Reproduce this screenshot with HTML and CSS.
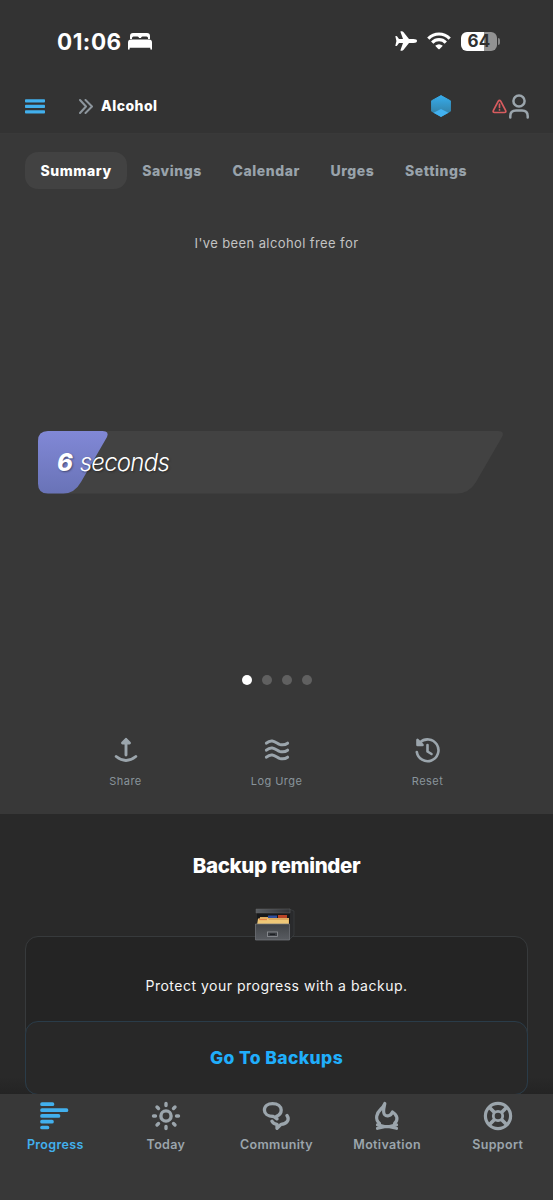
FILE: index.html
```html
<!DOCTYPE html>
<html lang="en">
<head>
<meta charset="utf-8">
<title>Alcohol – Progress</title>
<link rel="stylesheet" href="styles.css">
</head>
<body>
<div class="app">
  <header class="top">
    <div class="status">
      <span class="clock">01:06</span>
      <svg class="bed" width="24" height="17" viewBox="0 0 24 17" fill="#fff"><path d="M2 6V3Q2 0 5 0H19Q22 0 22 3V6H20V5Q20 3.500 18.500 3.500H14.500Q13 3.500 13 5H11Q11 3.500 9.500 3.500H5.500Q4 3.500 4 5V6Z"/><path d="M3 6.500H21Q24 6.500 24 9.500V15.500Q24 16.700 23.200 16.700Q22.300 16.700 22.300 15.500V14.800H1.700V15.500Q1.700 16.700 .8 16.700Q0 16.700 0 15.500V9.500Q0 6.500 3 6.500Z"/></svg>
      <div class="signals">
        <svg width="22" height="20" viewBox="0 0 22 20" fill="#fff"><path d="M22 10Q22 8.100 18.500 8.100H14L8.400 .9Q7.800 .2 6.800 .2H5.900Q5.300 .2 5.500 .9L8 8.100H4L2 5.300Q1.700 5 1.200 5H.7Q.3 5 .4 5.500L1.400 10L.4 14.500Q.3 15 .7 15H1.200Q1.700 15 2 14.700L4 11.900H8L5.500 19.100Q5.300 19.800 5.900 19.800H6.800Q7.800 19.800 8.400 19.100L14 11.900H18.500Q22 11.900 22 10Z"/></svg>
        <svg width="24" height="18" viewBox="0 0 24 18"><g fill="none" stroke="#fff" stroke-width="3.200"><path d="M1.300 6.600Q6 2 12 2T22.700 6.600"/><path d="M5.200 10.600Q8 7.700 12 7.700T18.800 10.600"/></g><path d="M8.200 13.700Q12 10.700 15.800 13.700L12.700 17Q12 17.700 11.300 17Z" fill="#fff"/></svg>
        <div class="battery"><span class="level">64</span></div>
      </div>
    </div>
    <div class="titlebar">
      <svg width="20" height="15" viewBox="0 0 20 15" fill="#42b0ed"><rect width="20" height="3.300" rx=".8" y=".2"/><rect width="20" height="3.300" rx=".8" y="5.700"/><rect width="20" height="3.300" rx=".8" y="11.200"/></svg>
      <svg class="chevrons" width="14" height="15" viewBox="0 0 14 15" fill="none" stroke="#8d969d" stroke-width="2" stroke-linecap="round" stroke-linejoin="round"><path d="M1 1L7 7.500L1 14M6.500 1L13 7.500L6.500 14"/></svg>
      <h1 class="title">Alcohol</h1>
      <svg class="gem" width="20" height="22" viewBox="0 0 20 22"><defs><linearGradient id="gem" x2="0" y2="1"><stop stop-color="#36acec"/><stop offset=".65" stop-color="#348cb8"/><stop offset="1" stop-color="#2f7da5"/></linearGradient></defs><path d="M10 .6L19.400 5.800V16.200L10 21.400L.6 16.200V5.800Z" fill="url(#gem)" stroke="url(#gem)" stroke-linejoin="round"/><path d="M10 14L17.500 17.700L10 21.900L2.500 17.700Z" fill="#42b1f0"/></svg>
      <div class="account">
        <svg width="15" height="15" viewBox="0 0 15 15" fill="none" stroke="#d95c5f" stroke-width="1.700" stroke-linecap="round" stroke-linejoin="round"><path d="M6.300 2.200Q7.500.5 8.700 2.200L13.700 11.700Q14.300 13.500 12.500 13.500H2.500Q.7 13.500 1.300 11.700ZM7.500 5.200V8.500M7.500 10.800V11"/></svg>
        <svg width="20" height="25" viewBox="0 0 20 25" fill="none" stroke="#9ba5ac" stroke-width="2.500" stroke-linecap="round"><circle cx="10" cy="7" r="5.600"/><path d="M1.300 23.500V22Q1.300 16.500 7 16.500H13Q18.700 16.500 18.700 22V23.500"/></svg>
      </div>
    </div>
  </header>

  <main class="summary">
    <nav class="tabs">
      <span class="tab tab-active">Summary</span>
      <span class="tab">Savings</span>
      <span class="tab">Calendar</span>
      <span class="tab">Urges</span>
      <span class="tab">Settings</span>
    </nav>
    <p class="intro">I've been alcohol free for</p>
    <div class="meter">
      <svg class="meter-shape" width="466" height="63" viewBox="0 0 466 63"><defs><linearGradient id="fill" x2="0" y2="1"><stop stop-color="#8188d6"/><stop offset="1" stop-color="#6973b7"/></linearGradient></defs><path d="M10 0H460Q467 0 464 6L438 51Q431 62.500 419 62.500H10Q0 62.500 0 52.500V10Q0 0 10 0Z" fill="#424242"/><path d="M10 0H64.500Q71.500 0 69 6L43 51Q36.500 62.500 25.500 62.500H10Q0 62.500 0 52.500V10Q0 0 10 0Z" fill="url(#fill)"/></svg>
      <p class="elapsed"><b>6</b> seconds</p>
    </div>
    <div class="dots"><i class="dot dot-on"></i><i class="dot"></i><i class="dot"></i><i class="dot"></i></div>
    <div class="actions">
      <div class="action">
        <svg width="24" height="26" viewBox="0 0 24 26" fill="none" stroke="#9ba5ac" stroke-width="2.900" stroke-linecap="round" stroke-linejoin="round"><path d="M2.200 19.500Q12 27.500 21.800 19.500"/><path d="M12 18V5M8.500 6L12 2.400L15.500 6Z"/></svg>
        <span>Share</span>
      </div>
      <div class="action">
        <svg width="26" height="26" viewBox="0 0 26 26" fill="none" stroke="#9ba5ac" stroke-width="3" stroke-linecap="round"><path d="M2.400 6.200C8 1 12 6 15.500 7.300Q20 8.800 23.600 6.200M2.400 13.200C8 8 12 13 15.500 14.300Q20 15.800 23.600 13.200M2.400 20.200C8 15 12 20 15.500 21.300Q20 22.800 23.600 20.200"/></svg>
        <span>Log Urge</span>
      </div>
      <div class="action">
        <svg width="26" height="26" viewBox="0 0 26 26" fill="none" stroke="#9ba5ac" stroke-width="2.600" stroke-linecap="round" stroke-linejoin="round"><path d="M1.800 15A10.900 10.900 0 1 0 5 5.400"/><path d="M2.500 3V8H7.500Z" fill="#9ba5ac"/><path d="M12.500 8V14.500L16.500 17"/></svg>
        <span>Reset</span>
      </div>
    </div>
  </main>

  <section class="backup">
    <h2 class="backup-title">Backup reminder</h2>
    <div class="card">
      <svg class="cabinet" width="42" height="34" viewBox="0 0 42 34"><defs><linearGradient id="front" x2="0" y2="1"><stop stop-color="#404347"/><stop offset="1" stop-color="#595c61"/></linearGradient><linearGradient id="lid"><stop stop-color="#5a5e63"/><stop offset="1" stop-color="#303236"/></linearGradient></defs><path d="M34 1L39 3V27L34 32Z" fill="#292a2c" stroke="#3c4044" stroke-width=".7"/><rect x="2" y="4" width="33" height="15" fill="#17181a"/><path d="M1 1H35V5H1Z" fill="url(#lid)" stroke="#666" stroke-width=".5"/><path d="M13 7.500H22V12H13Z" fill="#304f9e"/><path d="M23 7H32V11H23Z" fill="#b84427"/><path d="M5 9H13V10H34V16H4Z" fill="#dba95e"/><path d="M3 10.500H13L14 12H33.500V17H2Z" fill="#efc878"/><path d="M4 11.500H12" stroke="#e98544" stroke-width="1.300"/><path d="M.5 16H34.500V32H.5Z" fill="url(#front)" stroke="#75797e" stroke-width=".7"/><rect x="12.500" y="24" width="10" height="4.500" fill="#3a3d42" stroke="#92959a" stroke-width=".8"/><path d="M15 26.300H20" stroke="#181a1d"/></svg>
      <p class="card-text">Protect your progress with a backup.</p>
      <a class="card-button">Go To Backups</a>
    </div>
  </section>

  <nav class="bottom">
    <div class="item item-active">
      <svg width="30" height="30" viewBox="0 0 30 30" fill="none" stroke="#42b0ed" stroke-width="3.700" stroke-linecap="round"><path d="M2 3.200H12.500M2 9.200H26.500M2 14.900H18.500M2 20.700H12M2 26.500H7.500"/></svg>
      <span>Progress</span>
    </div>
    <div class="item">
      <svg width="30" height="30" viewBox="0 0 30 30" fill="none" stroke="#9ba5ac" stroke-width="3.400" stroke-linecap="round"><circle cx="15" cy="15" r="5.100"/><path d="M15 2.500V4.500M15 25.500V27.500M2.500 15H4.500M25.500 15H27.500M6 6L7.500 7.500M22.500 22.500L24 24M24 6L22.500 7.500M6 24L7.500 22.500"/></svg>
      <span>Today</span>
    </div>
    <div class="item">
      <svg width="30" height="30" viewBox="0 0 30 30" fill="none" stroke="#9ba5ac" stroke-width="3.300" stroke-linecap="round" stroke-linejoin="round"><path d="M12.500 15.500C6.500 15.500 3.400 12.500 3.400 9C3.400 5 7 2.600 11.500 2.600C17 2.600 20.200 5.500 20.200 9C20.200 12 18 14.300 15.500 15.300L16 18Z"/><path d="M26 14.500C29 19 25.500 23 20 23.300L16 27.300V23.300C13.500 23 11.800 21.800 11 20.200"/></svg>
      <span>Community</span>
    </div>
    <div class="item">
      <svg width="30" height="30" viewBox="0 0 30 30" fill="none" stroke="#9ba5ac" stroke-width="3.200" stroke-linecap="round" stroke-linejoin="round"><path d="M7.500 22.500C2.500 18 4.800 12 8.500 8.500C10.500 6.500 12 4.500 12.800 2.500C12 7 10.500 11 12.500 13.500C14.500 15.800 18.500 15.500 20.500 11C25.500 14 26.500 19 22.500 22.500"/><path d="M5.500 27.300L12.500 25.600H17.500L24.500 27.300M5.500 23.800L12.500 25.600M24.500 23.800L17.500 25.600"/></svg>
      <span>Motivation</span>
    </div>
    <div class="item">
      <svg width="30" height="30" viewBox="0 0 30 30" fill="none" stroke="#9ba5ac"><circle cx="15" cy="15" r="12.600" stroke-width="3.200"/><circle cx="15" cy="15" r="4.700" stroke-width="2.800"/><path d="M6.500 6.500L11.500 11.500M18.500 18.500L23.500 23.500M23.500 6.500L18.500 11.500M6.500 23.500L11.500 18.500" stroke-width="3.600"/></svg>
      <span>Support</span>
    </div>
  </nav>
</div>
</body>
</html>
```
FILE: styles.css
```css
* { box-sizing: border-box; margin: 0; padding: 0; }
svg { display: block; flex: none; }
body { background: #383838; font-family: Inter, "Liberation Sans", sans-serif; color: #fff; }
.app { width: 553px; height: 1200px; display: flex; flex-direction: column; overflow: hidden; }

.top { height: 133px; flex: none; background: #333; }
.status { height: 82px; display: flex; align-items: center; padding: 0 53px 0 57px; }
.clock { width: 71px; font-size: 22.500px; font-weight: 700; letter-spacing: .5px; white-space: nowrap; }
.signals { margin-left: auto; display: flex; align-items: center; gap: 10px; }
.battery { position: relative; width: 36px; height: 19px; border-radius: 6px; background: linear-gradient(90deg, #fff 64%, #929292 64%); display: flex; align-items: center; justify-content: center; margin-right: 3px; }
.battery::after { content: ""; position: absolute; right: -3px; top: 6px; width: 2px; height: 7px; border-radius: 0 2px 2px 0; background: #858585; }
.level { color: #303030; font-size: 17px; font-weight: 700; line-height: 19px; letter-spacing: .2px; }
.titlebar { height: 48px; display: flex; align-items: center; padding: 0 24px 0 25px; }
.chevrons { margin-left: 34px; }
.title { margin-left: 8px; font-size: 14px; line-height: 17px; margin-bottom: 1px; font-weight: 800; letter-spacing: .45px; }
.gem { margin-left: auto; }
.account { display: flex; align-items: center; gap: 2px; margin-left: 41px; }

.summary { height: 681px; flex: none; padding-top: 18px; background: #383838; border-top: 1px solid #393939; }
.tabs { display: flex; padding-left: 25px; height: 37px; }
.tab { padding: 0 15px 0 15.500px; line-height: 37px; font-size: 14px; font-weight: 800; letter-spacing: .58px; color: #99a3ab; border-radius: 13px; }
.tab-active { background: #424242; color: #fff; }
.intro { margin-top: 44px; line-height: 20px; text-align: center; font-size: 13px; letter-spacing: .4px; color: #c3c3c3; }
.meter { margin: 178px 0 0 38px; width: 466px; height: 63px; display: grid; }
.meter-shape, .elapsed { grid-area: 1 / 1; }
.elapsed { padding-left: 19px; line-height: 63px; font-size: 24px; font-weight: 350; font-style: italic; letter-spacing: -.75px; word-spacing: 1.500px; text-shadow: 1px 1px 2px #0006; }
.elapsed b { font-weight: 800; }
.dots { margin: 181px 0 0; display: flex; justify-content: center; gap: 10px; }
.dot { width: 10px; height: 10px; border-radius: 50%; background: #606060; }
.dot-on { background: #fff; }
.actions { margin: 52px 50px 0; display: grid; grid-template-columns: repeat(3, 1fr); }
.action { display: flex; flex-direction: column; align-items: center; gap: 10px; font-size: 11px; line-height: 17px; letter-spacing: .45px; color: #89949b; }

.backup { height: 280px; flex: none; background: linear-gradient(#292929 94%, #242424); overflow: hidden; }
.backup-title { margin-top: 39px; line-height: 26px; text-align: center; font-size: 20.500px; font-weight: 800; letter-spacing: -.35px; }
.card { position: relative; width: 503px; height: 159px; margin: 57px 0 0 25px; border: 1px solid #373a3c; border-radius: 13px; background: #242424; }
.cabinet { position: absolute; left: 229px; top: -29px; }
.card-text { padding-top: 36px; line-height: 25px; text-align: center; font-size: 14px; letter-spacing: .5px; color: #f5f5f5; }
.card-button { display: block; margin: 23px -1px 0; height: 74px; border: 1px solid #2a3c49; border-radius: 13px; background: #282828; text-align: center; line-height: 72px; font-size: 17.500px; font-weight: 800; letter-spacing: .4px; color: #20aefb; }

.bottom { flex: 1; background: #383838; display: grid; grid-template-columns: repeat(5, 1fr); padding-top: 7px; }
.item { display: flex; flex-direction: column; align-items: center; gap: 4px; font-size: 12.500px; font-weight: 600; letter-spacing: .35px; line-height: 20px; color: #9ba5ac; }
.item-active { color: #42b0ed; }
```
